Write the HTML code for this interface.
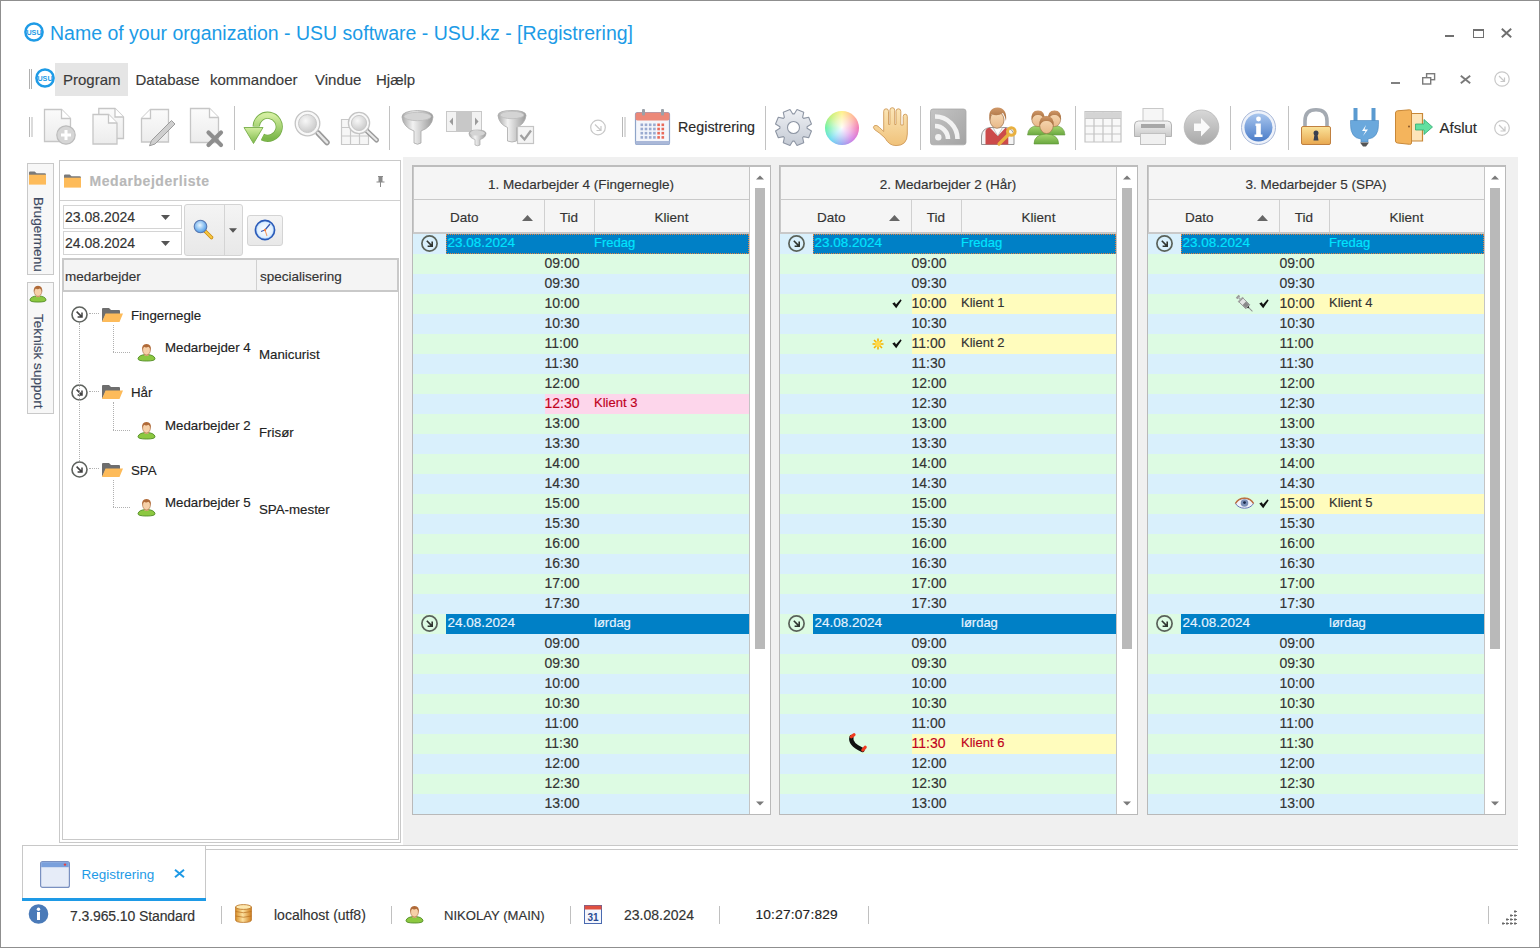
<!DOCTYPE html><html><head><meta charset="utf-8"><style>
*{margin:0;padding:0;box-sizing:border-box}
html,body{width:1540px;height:948px;overflow:hidden;background:#fff}
body{font-family:"Liberation Sans",sans-serif;color:#333;position:relative}
.a{position:absolute}
.t{position:absolute;white-space:nowrap;line-height:1;-webkit-text-stroke:0.15px currentColor}
svg{position:absolute;overflow:visible}
</style></head><body>
<div class="a" style="left:0;top:0;width:1540px;height:948px;border:1px solid #8f8f8f"></div>
<svg style="left:24px;top:22px" width="20" height="20" viewBox="0 0 20 20"><circle cx="10" cy="10" r="8.6" fill="none" stroke="#1e9be6" stroke-width="2.5"/><text x="10" y="12.6" font-family="Liberation Sans" font-weight="bold" font-size="7.2" fill="#1e9be6" text-anchor="middle">USU</text></svg>
<div class="t" style="left:50px;top:24px;font-size:19.5px;color:#1c9be6;-webkit-text-stroke:0">Name of your organization - USU software - USU.kz - [Registrering]</div>
<div class="a" style="left:1445px;top:35px;width:9px;height:2px;background:#707070"></div>
<div class="a" style="left:1473px;top:29px;width:11px;height:9px;border:1px solid #707070;border-top-width:2px"></div>
<svg style="left:1501px;top:28px" width="11" height="10" viewBox="0 0 11 10"><path d="M0.8 0.8L10.2 9.2M10.2 0.8L0.8 9.2" stroke="#6e6e6e" stroke-width="1.9"/></svg>
<div class="a" style="left:29px;top:69px;width:1px;height:20px;background:#b0b0b0"></div>
<div class="a" style="left:31px;top:69px;width:1px;height:20px;background:#b0b0b0"></div>
<svg style="left:35px;top:68px" width="20" height="20" viewBox="0 0 20 20"><circle cx="10" cy="10" r="8.6" fill="none" stroke="#1e9be6" stroke-width="2.5"/><text x="10" y="12.6" font-family="Liberation Sans" font-weight="bold" font-size="7.2" fill="#1e9be6" text-anchor="middle">USU</text></svg>
<div class="a" style="left:55px;top:63px;width:73px;height:33px;background:#e5e5e5"></div>
<div class="t" style="left:63px;top:71.8px;font-size:15px;color:#3a3a3a">Program</div>
<div class="t" style="left:135.5px;top:71.8px;font-size:15px;color:#3a3a3a">Database</div>
<div class="t" style="left:210px;top:71.8px;font-size:15px;color:#3a3a3a">kommandoer</div>
<div class="t" style="left:315px;top:71.8px;font-size:15px;color:#3a3a3a">Vindue</div>
<div class="t" style="left:376px;top:71.8px;font-size:15px;color:#3a3a3a">Hjælp</div>
<div class="a" style="left:1391px;top:82px;width:9px;height:2px;background:#808080"></div>
<svg style="left:1422px;top:73px" width="14" height="12" viewBox="0 0 14 12"><rect x="4.6" y="0.7" width="8" height="6" fill="none" stroke="#7a7a7a" stroke-width="1.4"/><rect x="0.7" y="4.7" width="8" height="6.3" fill="#fff" stroke="#7a7a7a" stroke-width="1.4"/></svg>
<svg style="left:1460px;top:75px" width="11" height="9" viewBox="0 0 11 9"><path d="M0.8 0.8L10.2 8.2M10.2 0.8L0.8 8.2" stroke="#7a7a7a" stroke-width="1.9"/></svg>
<svg style="left:1494px;top:71px" width="16" height="16" viewBox="0 0 16 16"><circle cx="8" cy="8" r="7.2" fill="none" stroke="#c8c8c8" stroke-width="1.2"/><path d="M5 5L10.5 10.5M10.5 6.5V10.5H6.5" fill="none" stroke="#c8c8c8" stroke-width="1.2"/></svg>
<svg style="left:0;top:0" width="1540" height="160" viewBox="0 0 1540 160"><defs><linearGradient id="gpage" x1="0" y1="0" x2="0" y2="1"><stop offset="0" stop-color="#fbfbfb"/><stop offset="1" stop-color="#ececec"/></linearGradient><linearGradient id="ggreen" x1="0" y1="0" x2="0" y2="1"><stop offset="0" stop-color="#d3eea0"/><stop offset="1" stop-color="#7cb84a"/></linearGradient><radialGradient id="glens" cx="0.4" cy="0.35" r="0.7"><stop offset="0" stop-color="#f8f8f8"/><stop offset="1" stop-color="#c8c8c8"/></radialGradient><linearGradient id="gfun" x1="0" y1="0" x2="1" y2="0"><stop offset="0" stop-color="#a8a8a8"/><stop offset="0.35" stop-color="#f2f2f2"/><stop offset="1" stop-color="#9a9a9a"/></linearGradient><radialGradient id="gwheel" cx="0.5" cy="0.5" r="0.5"><stop offset="0" stop-color="#ffffff"/><stop offset="1" stop-color="#ffffff" stop-opacity="0"/></radialGradient><linearGradient id="ginfo" x1="0" y1="0" x2="0" y2="1"><stop offset="0" stop-color="#a9c6ee"/><stop offset="1" stop-color="#4a7cc8"/></linearGradient><linearGradient id="glock" x1="0" y1="0" x2="0" y2="1"><stop offset="0" stop-color="#fbe39a"/><stop offset="1" stop-color="#e8a850"/></linearGradient><linearGradient id="gprint" x1="0" y1="0" x2="0" y2="1"><stop offset="0" stop-color="#f6f6f6"/><stop offset="1" stop-color="#c8c8c8"/></linearGradient><linearGradient id="garrow" x1="0" y1="0" x2="0" y2="1"><stop offset="0" stop-color="#d8d8d8"/><stop offset="1" stop-color="#a8a8a8"/></linearGradient></defs><rect x="29" y="117" width="1" height="20" fill="#b8b8b8"/><rect x="31.5" y="117" width="1" height="20" fill="#b8b8b8"/><path d="M44.5 109.5H61.5L70.5 118.5V141.5H44.5Z" fill="url(#gpage)" stroke="#c6c6c6" stroke-width="1.3"/><path d="M61.5 109.5V118.5H70.5" fill="#fff" stroke="#c6c6c6" stroke-width="1.3"/><circle cx="66" cy="135" r="9.2" fill="#d6d6d6" stroke="#bcbcbc" stroke-width="1.2"/><path d="M66 130V140M61 135H71" stroke="#fff" stroke-width="3"/><path d="M98.8 108.5H115L123.5 117V138.5H98.8Z" fill="url(#gpage)" stroke="#c6c6c6" stroke-width="1.3"/><path d="M115 108.5V117H123.5" fill="#fff" stroke="#c6c6c6" stroke-width="1.3"/><path d="M93 114.5H108.5L117 123V144H93Z" fill="url(#gpage)" stroke="#c6c6c6" stroke-width="1.3"/><path d="M108.5 114.5V123H117" fill="#fff" stroke="#c6c6c6" stroke-width="1.3"/><path d="M150.5 109.5H168.5V142H141.5V118.5Z" fill="url(#gpage)" stroke="#c6c6c6" stroke-width="1.3"/><path d="M150.5 109.5V118.5H141.5" fill="#fff" stroke="#c6c6c6" stroke-width="1.3"/><path d="M171.5 120.5L175 124L155 144L149.5 145.8L151.5 140.5Z" fill="#cfcfcf" stroke="#9c9c9c" stroke-width="1"/><path d="M190.5 108.5H209.5L218.5 117.5V142.5H190.5Z" fill="url(#gpage)" stroke="#c6c6c6" stroke-width="1.3"/><path d="M209.5 108.5V117.5H218.5" fill="#fff" stroke="#c6c6c6" stroke-width="1.3"/><path d="M208.5 132.5L221 145M221 132.5L208.5 145" stroke="#8e8e8e" stroke-width="4.2" stroke-linecap="round"/><rect x="234" y="106" width="1" height="44" fill="#c2c2c2"/><rect x="389" y="106" width="1" height="44" fill="#c2c2c2"/><rect x="765" y="106" width="1" height="44" fill="#c2c2c2"/><rect x="920" y="106" width="1" height="44" fill="#c2c2c2"/><rect x="1075" y="106" width="1" height="44" fill="#c2c2c2"/><rect x="1230" y="106" width="1" height="44" fill="#c2c2c2"/><rect x="1288" y="106" width="1" height="44" fill="#c2c2c2"/><path d="M256.2 126.5A11.5 11.5 0 1 1 262.5 137" fill="none" stroke="#76ad48" stroke-width="7.2"/><path d="M256.2 126.5A11.5 11.5 0 1 1 262.5 137" fill="none" stroke="url(#ggreen)" stroke-width="5.6"/><path d="M244 127.5H263L253.5 143.5Z" fill="url(#ggreen)" stroke="#76ad48" stroke-width="0.9" stroke-linejoin="round"/><path d="M318 133L327 142.5" stroke="#9a9a9a" stroke-width="5.5" stroke-linecap="round"/><path d="M318 133L327 142.5" stroke="#e8e8e8" stroke-width="2.5" stroke-linecap="round"/><circle cx="307.5" cy="123.5" r="12.3" fill="#f8f8f8" stroke="#c4c4c4" stroke-width="1.3"/><circle cx="307.5" cy="123.5" r="9" fill="url(#glens)" stroke="#c8c8c8" stroke-width="1"/><path d="M341.5 119.5H368.5V144.5H341.5ZM341.5 127.5H368.5M341.5 136H368.5M350.5 119.5V144.5M359.5 119.5V144.5" fill="#f6f6f6" stroke="#c8c8c8" stroke-width="1.2"/><path d="M367 131L376.5 140" stroke="#9a9a9a" stroke-width="5" stroke-linecap="round"/><path d="M367 131L376.5 140" stroke="#e8e8e8" stroke-width="2.2" stroke-linecap="round"/><circle cx="359" cy="123" r="10.6" fill="#f8f8f8" stroke="#c4c4c4" stroke-width="1.3"/><circle cx="359" cy="123" r="7.6" fill="url(#glens)" stroke="#c8c8c8" stroke-width="1"/><path d="M402 117Q402 111 417.5 110.5Q433 111 433 117Q432 127 421 131V143Q417.5 145.5 414 143V131Q403 127 402 117Z" fill="url(#gfun)" stroke="#a8a8a8" stroke-width="0.8"/><ellipse cx="417.5" cy="116.5" rx="13.5" ry="4.2" fill="#d4d4d4" stroke="#bcbcbc" stroke-width="0.8"/><rect x="446.5" y="111.5" width="35" height="20" fill="#f2f2f2" stroke="#c8c8c8"/><rect x="456" y="112" width="16" height="19" fill="#c8c8c8"/><path d="M453 117.5V125.5L449.5 121.5Z M475 117.5V125.5L478.5 121.5Z" fill="#9a9a9a"/><path d="M469 133.5Q469 130 477.5 130Q486 130 486 133.5Q485.5 138 480 139.5V145Q477.5 146.5 475 145V139.5Q469.5 138 469 133.5Z" fill="url(#gfun)" stroke="#a8a8a8" stroke-width="0.7"/><ellipse cx="477.5" cy="133.2" rx="7.5" ry="2.4" fill="#d4d4d4"/><path d="M498 115.5Q498 110.5 512 110.5Q526 110.5 526 115.5Q525 124 516.5 127.5V141Q512 143 507.5 141V127.5Q499 124 498 115.5Z" fill="url(#gfun)" stroke="#a8a8a8" stroke-width="0.8"/><ellipse cx="512" cy="115" rx="12" ry="3.7" fill="#d4d4d4" stroke="#bcbcbc" stroke-width="0.8"/><rect x="517.5" y="126.5" width="16" height="17" fill="#f4f4f4" stroke="#c4c4c4" stroke-width="1.2"/><path d="M520.5 135L524.5 139.5L531 130.5" fill="none" stroke="#a0a0a0" stroke-width="2.3"/><circle cx="598" cy="127.5" r="7.3" fill="none" stroke="#c8c8c8" stroke-width="1.2"/><path d="M595 124.5L600.5 130M601 126V130.5H596.5" fill="none" stroke="#c8c8c8" stroke-width="1.2"/><rect x="622" y="117" width="1" height="20" fill="#b8b8b8"/><rect x="624.5" y="117" width="1" height="20" fill="#b8b8b8"/><rect x="635.5" y="112.5" width="34" height="32" rx="2" fill="#f4f6fb" stroke="#8ea4c8" stroke-width="1.2"/><rect x="635.5" y="112.5" width="34" height="8" rx="2" fill="#ec8878"/><rect x="642" y="109" width="3" height="6.5" rx="1" fill="#9aa0a8"/><rect x="661" y="109" width="3" height="6.5" rx="1" fill="#9aa0a8"/><rect x="640.5" y="123.5" width="2.6" height="2.6" fill="#9aaad0"/><rect x="644.7" y="123.5" width="2.6" height="2.6" fill="#9aaad0"/><rect x="648.9" y="123.5" width="2.6" height="2.6" fill="#9aaad0"/><rect x="653.1" y="123.5" width="2.6" height="2.6" fill="#9aaad0"/><rect x="657.3" y="123.5" width="2.6" height="2.6" fill="#e86a5a"/><rect x="661.5" y="123.5" width="2.6" height="2.6" fill="#e86a5a"/><rect x="640.5" y="127.7" width="2.6" height="2.6" fill="#9aaad0"/><rect x="644.7" y="127.7" width="2.6" height="2.6" fill="#9aaad0"/><rect x="648.9" y="127.7" width="2.6" height="2.6" fill="#9aaad0"/><rect x="653.1" y="127.7" width="2.6" height="2.6" fill="#9aaad0"/><rect x="657.3" y="127.7" width="2.6" height="2.6" fill="#e86a5a"/><rect x="661.5" y="127.7" width="2.6" height="2.6" fill="#e86a5a"/><rect x="640.5" y="131.9" width="2.6" height="2.6" fill="#9aaad0"/><rect x="644.7" y="131.9" width="2.6" height="2.6" fill="#9aaad0"/><rect x="648.9" y="131.9" width="2.6" height="2.6" fill="#9aaad0"/><rect x="653.1" y="131.9" width="2.6" height="2.6" fill="#9aaad0"/><rect x="657.3" y="131.9" width="2.6" height="2.6" fill="#e86a5a"/><rect x="661.5" y="131.9" width="2.6" height="2.6" fill="#e86a5a"/><rect x="640.5" y="136.1" width="2.6" height="2.6" fill="#9aaad0"/><rect x="644.7" y="136.1" width="2.6" height="2.6" fill="#9aaad0"/><rect x="648.9" y="136.1" width="2.6" height="2.6" fill="#9aaad0"/><rect x="653.1" y="136.1" width="2.6" height="2.6" fill="#9aaad0"/><rect x="657.3" y="136.1" width="2.6" height="2.6" fill="#e86a5a"/><rect x="661.5" y="136.1" width="2.6" height="2.6" fill="#e86a5a"/><rect x="635.5" y="141" width="34" height="3.5" fill="#aab8d8"/><defs><linearGradient id="ggear" x1="0" y1="0" x2="0" y2="1"><stop offset="0" stop-color="#eef0f4"/><stop offset="1" stop-color="#c4cad4"/></linearGradient></defs><path d="M811.46 131.00 L808.68 137.72 L803.61 136.60 L802.60 137.61 L803.72 142.68 L797.00 145.46 L794.22 141.08 L792.78 141.08 L790.00 145.46 L783.28 142.68 L784.40 137.61 L783.39 136.60 L778.32 137.72 L775.54 131.00 L779.92 128.22 L779.92 126.78 L775.54 124.00 L778.32 117.28 L783.39 118.40 L784.40 117.39 L783.28 112.32 L790.00 109.54 L792.78 113.92 L794.22 113.92 L797.00 109.54 L803.72 112.32 L802.60 117.39 L803.61 118.40 L808.68 117.28 L811.46 124.00 L807.08 126.78 L807.08 128.22Z M799.5 127.5A6 6 0 1 0 787.5 127.5A6 6 0 1 0 799.5 127.5Z" fill="url(#ggear)" stroke="#8e96a4" stroke-width="1.1" fill-rule="evenodd" stroke-linejoin="round"/><defs><linearGradient id="ghand" x1="0" y1="0" x2="0" y2="1"><stop offset="0" stop-color="#fbe6b8"/><stop offset="1" stop-color="#f0c27a"/></linearGradient></defs><path d="M885 138Q880 133 874.5 129.5Q872.3 127 874.5 125.6Q876.7 124.5 879.5 127.5L883.7 131.5V111.3Q883.7 108.8 886.1 108.8Q888.5 108.8 888.5 111.3V124.5H889.9V110.2Q889.9 107.7 892.3 107.7Q894.7 107.7 894.7 110.2V124.5H896V111.3Q896 108.8 898.4 108.8Q900.8 108.8 900.8 111.3V125H903.2V116.5Q903.2 114.2 905.25 114.2Q907.3 114.2 907.3 116.5V134Q907.3 145.6 896 145.6Q889 145.6 885 138Z" fill="url(#ghand)" stroke="#cf9a58" stroke-width="0.9"/><defs><linearGradient id="grss" x1="0" y1="0" x2="1" y2="1"><stop offset="0" stop-color="#c4c4c4"/><stop offset="1" stop-color="#a4a4a4"/></linearGradient></defs><rect x="930.5" y="109" width="35.5" height="35.8" rx="2.5" fill="url(#grss)" stroke="#a8a8a8" stroke-width="0.8"/><circle cx="938.3" cy="137.3" r="3.2" fill="#f2f2f2"/><path d="M935 126A13 13 0 0 1 948 139M935 116.5A22.5 22.5 0 0 1 957.5 139" fill="none" stroke="#f2f2f2" stroke-width="4.6"/><defs><linearGradient id="gface" x1="0" y1="0" x2="0" y2="1"><stop offset="0" stop-color="#f8dcb8"/><stop offset="1" stop-color="#e8b888"/></linearGradient><linearGradient id="ghair" x1="0" y1="0" x2="0" y2="1"><stop offset="0" stop-color="#d09868"/><stop offset="1" stop-color="#a06838"/></linearGradient><linearGradient id="gbody" x1="0" y1="0" x2="0" y2="1"><stop offset="0" stop-color="#a8d870"/><stop offset="1" stop-color="#6aa840"/></linearGradient></defs><path d="M981.5 144.5V136Q982 128.5 990 127.5H1006Q1013.5 128.5 1014 136V144.5Z" fill="#f4f4f4" stroke="#8a8a8a" stroke-width="0.9"/><path d="M985.5 144.5V131Q986 128 990 127.8L997.8 136L1005.5 127.8Q1008.3 128.5 1008.3 131V144.5Z" fill="#cc4a4a"/><path d="M993 127.5L997.8 136L1002.5 127.5Z" fill="#ffffff" stroke="#999" stroke-width="0.5"/><ellipse cx="997" cy="120" rx="7" ry="8.3" fill="url(#gface)" stroke="#9a6a40" stroke-width="0.7"/><path d="M989.8 121Q987 108 997.5 107.5Q1007.5 108 1006 121Q1005 116 1003 113Q997 117 991.5 114Q990.5 117 989.8 121Z" fill="url(#ghair)"/><circle cx="1011.3" cy="131.5" r="3.8" fill="none" stroke="#e8b040" stroke-width="3"/><path d="M1008.5 134.5L999 144" stroke="#e8b040" stroke-width="3.2" stroke-linecap="round"/><path d="M1027.5 135Q1028 126 1038 125.5Q1048 126 1048.5 135Z" fill="url(#gbody)" stroke="#6a9a48" stroke-width="0.6"/><ellipse cx="1038" cy="119" rx="6.2" ry="7.6" fill="url(#gface)" stroke="#a07048" stroke-width="0.6"/><path d="M1031.7 120Q1030.5 110.5 1038 110.5Q1045.5 110.5 1044.3 120Q1042 114.5 1038 115Q1034 114.5 1031.7 120Z" fill="url(#ghair)"/><path d="M1044.0 135Q1044.5 126 1054.5 125.5Q1064.5 126 1065.0 135Z" fill="url(#gbody)" stroke="#6a9a48" stroke-width="0.6"/><ellipse cx="1054.5" cy="119" rx="6.2" ry="7.6" fill="url(#gface)" stroke="#a07048" stroke-width="0.6"/><path d="M1048.2 120Q1047.0 110.5 1054.5 110.5Q1062.0 110.5 1060.8 120Q1058.5 114.5 1054.5 115Q1050.5 114.5 1048.2 120Z" fill="url(#ghair)"/><path d="M1034 144Q1034 134.5 1046.3 134Q1058.6 134.5 1058.6 144Z" fill="url(#gbody)" stroke="#5c9432" stroke-width="0.6"/><ellipse cx="1046.5" cy="125" rx="6.8" ry="8.6" fill="url(#gface)" stroke="#a07048" stroke-width="0.6"/><path d="M1039.6 126Q1038.5 116 1046.5 116Q1054.5 116 1053.4 126Q1051 120.5 1046.5 121Q1042 120.5 1039.6 126Z" fill="url(#ghair)"/><path d="M1085 111.5H1121V142H1085ZM1085 118.5H1121M1085 126H1121M1085 134H1121M1094 111.5V142M1103 111.5V142M1112 111.5V142" fill="#f8f8f8" stroke="#c4c4c4" stroke-width="1.2"/><rect x="1085.6" y="112.1" width="34.8" height="6" fill="#d4d4d4"/><rect x="1143" y="108.5" width="20" height="16" fill="#f6f6f6" stroke="#c8c8c8"/><path d="M1134.5 125Q1134.5 121 1138.5 121H1167.5Q1171.5 121 1171.5 125V136.5H1134.5Z" fill="url(#gprint)" stroke="#b4b4b4"/><rect x="1141" y="124" width="24" height="4" fill="#a8a8a8"/><rect x="1140.5" y="133.5" width="25" height="11" fill="#f0f0f0" stroke="#c0c0c0"/><circle cx="1201.5" cy="127.3" r="17.3" fill="url(#garrow)" stroke="#b8b8b8" stroke-width="0.8"/><path d="M1194 123.5H1201V118L1210 127.3L1201 136.5V131H1194Z" fill="#fafafa"/><circle cx="1258.5" cy="127.5" r="17" fill="#eef2fa" stroke="#a8b8d8" stroke-width="1"/><circle cx="1258.5" cy="127.5" r="14" fill="url(#ginfo)"/><circle cx="1258.5" cy="119" r="2.4" fill="#fff"/><path d="M1255.5 123.5H1260.8V134.5H1262.5V137H1254.5V134.5H1256.2V126H1255.5Z" fill="#fff"/><path d="M1305 127V121Q1305 109.8 1316 109.8Q1327 109.8 1327 121V127" fill="none" stroke="#a4aab2" stroke-width="3.6"/><rect x="1301.5" y="126.5" width="29" height="18" rx="1.5" fill="url(#glock)" stroke="#c08040" stroke-width="1"/><circle cx="1316" cy="133" r="2.5" fill="#3a4050"/><path d="M1314.6 134L1313.5 140.5H1318.5L1317.4 134Z" fill="#3a4050"/><rect x="1353.5" y="108" width="4" height="13" fill="#5a9ad0"/><rect x="1371.5" y="108" width="4" height="13" fill="#5a9ad0"/><path d="M1350.5 120.5H1378.5V124.5Q1378.5 138 1368 139V142H1361V139Q1350.5 138 1350.5 124.5Z" fill="#6aa8dc" stroke="#4a88c0" stroke-width="0.6"/><path d="M1366 125L1362 131H1365.5L1363 136L1368 129.5H1364.5Z" fill="#fff"/><path d="M1360 142.5H1369L1366 146.5H1363Z" fill="#555"/><path d="M1406 113.5H1422.5V141H1406Z" fill="#fde4b8" stroke="#c88838" stroke-width="1.2"/><path d="M1395.5 113Q1395.5 111 1397.5 110.8L1409.5 109.8Q1411.5 109.8 1411.5 111.8V143Q1411.5 144.5 1409.5 144.3L1397.5 143Q1395.5 142.8 1395.5 141Z" fill="#f4b45c" stroke="#c88838" stroke-width="1"/><circle cx="1409" cy="126.5" r="1" fill="#8a5a2a"/><path d="M1415.5 124H1424V119.5L1432.5 127L1424 134.5V130H1415.5Z" fill="#62e0a0" stroke="#30a870" stroke-width="0.8"/><circle cx="1502" cy="128" r="7.3" fill="none" stroke="#c8c8c8" stroke-width="1.2"/><path d="M499 125L1504.5 130.5" fill="none"/><path d="M1499 125L1504.5 130.5M1505 126.5V131H1500.5" fill="none" stroke="#c8c8c8" stroke-width="1.2"/></svg>
<div class="t" style="left:678px;top:120px;font-size:14.3px;color:#2a2a2a">Registrering</div>
<div class="t" style="left:1439.5px;top:120px;font-size:15px;color:#2a2a2a">Afslut</div>
<div class="a" style="left:825px;top:110.5px;width:34px;height:34px;border-radius:50%;background:conic-gradient(#fff080,#ffb090,#f070b0,#d070e0,#90a0f0,#60d8f0,#60f0a0,#c0f070,#fff080)"></div>
<div class="a" style="left:825px;top:110.5px;width:34px;height:34px;border-radius:50%;background:radial-gradient(circle at 50% 50%,rgba(255,255,255,0.95) 0,rgba(255,255,255,0.55) 35%,rgba(255,255,255,0) 75%)"></div>
<div class="a" style="left:403px;top:157px;width:1115px;height:689px;background:#f0f0f0"></div>
<div class="a" style="left:22px;top:845px;width:1496px;height:1px;background:#c8c8c8"></div>
<div class="a" style="left:206px;top:849px;width:1312px;height:1px;background:#c8c8c8"></div>
<div class="a" style="left:27px;top:163px;width:27px;height:112px;border:1px solid #c9c9c9;background:#f7f7f7"></div>
<svg style="left:29px;top:171px" width="17" height="14" viewBox="0 0 18 14"><path d="M0 3V1.2Q0 0 1.2 0H6L8 2H16.5Q18 2 18 3.5V4H0Z" fill="#7a7a7a"/><rect x="0" y="3.5" width="18" height="10.5" fill="#fdbb5a"/></svg>
<div class="t" style="left:45px;top:196.5px;font-size:13.6px;color:#3e4a62;transform-origin:0 0;transform:rotate(90deg)">Brugermenu</div>
<div class="a" style="left:27px;top:282px;width:27px;height:132px;border:1px solid #c9c9c9;background:#f7f7f7"></div>
<svg style="left:29px;top:285px" width="18" height="18" viewBox="0 0 19 19"><path d="M1 15.8Q1.5 11.8 9.5 11.5Q17.5 11.8 18 15.8Q18 18 9.5 18Q1 18 1 15.8Z" fill="#8cc840" stroke="#4e8a20" stroke-width="0.9"/><path d="M7.5 10V12.8H11.5V10Z" fill="#e8b088"/><ellipse cx="9.5" cy="7" rx="3.9" ry="5" fill="#f6d0a8" stroke="#a86a40" stroke-width="0.6"/><path d="M5.2 8Q4.2 1 9.5 0.9Q14.8 1 13.8 8Q13.5 4.5 11.5 3.8Q9 5 7 3.8Q5.6 5 5.2 8Z" fill="#b06a38"/></svg>
<div class="t" style="left:45px;top:314px;font-size:13.6px;color:#3e4a62;transform-origin:0 0;transform:rotate(90deg)">Teknisk support</div>
<div class="a" style="left:59px;top:160px;width:342px;height:683px;border:1px solid #c9c9c9;background:#fff"></div>
<svg style="left:64px;top:174px" width="17" height="14" viewBox="0 0 18 14"><path d="M0 3V1.2Q0 0 1.2 0H6L8 2H16.5Q18 2 18 3.5V4H0Z" fill="#7a7a7a"/><rect x="0" y="3.5" width="18" height="10.5" fill="#fdbb5a"/></svg>
<div class="t" style="left:89.5px;top:174px;font-size:14px;letter-spacing:0.55px;font-weight:bold;color:#b8b8b8">Medarbejderliste</div>
<svg style="left:376px;top:176px" width="9" height="11" viewBox="0 0 9 11"><path d="M2 0H7V1H6.5V5.5H8.5V6.5H5V11H4V6.5H0.5V5.5H2.5V1H2Z" fill="#8a8a8a"/></svg>
<div class="a" style="left:60px;top:200px;width:340px;height:1px;background:#d0d0d0"></div>
<div class="a" style="left:63px;top:205px;width:119px;height:24px;border:1px solid #d4d4d4;background:#fff"></div>
<div class="t" style="left:65px;top:210px;font-size:14px;color:#333">23.08.2024</div>
<svg style="left:161px;top:215px" width="9" height="5" viewBox="0 0 9 5"><path d="M0 0H9L4.5 5Z" fill="#555"/></svg>
<div class="a" style="left:63px;top:231px;width:119px;height:24px;border:1px solid #d4d4d4;background:#fff"></div>
<div class="t" style="left:65px;top:236px;font-size:14px;color:#333">24.08.2024</div>
<svg style="left:161px;top:241px" width="9" height="5" viewBox="0 0 9 5"><path d="M0 0H9L4.5 5Z" fill="#555"/></svg>
<div class="a" style="left:184px;top:204px;width:59px;height:52px;border:1px solid #d4d4d4;border-radius:3px;background:linear-gradient(#f4f4f4,#e8e8e8)"></div>
<div class="a" style="left:224px;top:205px;width:1px;height:50px;background:#d4d4d4"></div>
<svg style="left:229px;top:227.5px" width="8" height="5" viewBox="0 0 9 5"><path d="M0 0H9L4.5 5Z" fill="#555"/></svg>
<svg style="left:193px;top:219px" width="22" height="22" viewBox="0 0 22 22"><defs><radialGradient id="gsl" cx="0.45" cy="0.4" r="0.6"><stop offset="0" stop-color="#e8f6ff"/><stop offset="1" stop-color="#4a9ae8"/></radialGradient></defs><path d="M12 12L18.5 18.5" stroke="#c88a10" stroke-width="3.6" stroke-linecap="round"/><path d="M12 12L18.5 18.5" stroke="#f8c840" stroke-width="2" stroke-linecap="round"/><circle cx="7.5" cy="7.5" r="6.3" fill="url(#gsl)" stroke="#5a78b0" stroke-width="1.1"/></svg>
<div class="a" style="left:247px;top:215px;width:36px;height:31px;border:1px solid #d4d4d4;border-radius:3px;background:linear-gradient(#f4f4f4,#e8e8e8)"></div>
<svg style="left:254px;top:219px" width="22" height="22" viewBox="0 0 22 22"><defs><radialGradient id="gcl" cx="0.5" cy="0.5" r="0.55"><stop offset="0" stop-color="#ffffff"/><stop offset="0.7" stop-color="#e0f0ff"/><stop offset="1" stop-color="#6aa8f0"/></radialGradient></defs><circle cx="11" cy="11" r="9.6" fill="url(#gcl)" stroke="#2a5ab8" stroke-width="1.6"/><path d="M11 11L16 5M11 11L7 12.5" stroke="#3a5ab0" stroke-width="1.3"/><path d="M11 11L13 17" stroke="#f0a070" stroke-width="1.1"/><circle cx="11" cy="11" r="1.2" fill="#f08040"/></svg>
<div class="a" style="left:62px;top:258px;width:337px;height:582px;border:1px solid #c9c9c9;background:#fff"></div>
<div class="a" style="left:62px;top:258px;width:337px;height:34px;border:2px solid #c9c9c9;background:#f4f4f4"></div>
<div class="a" style="left:256px;top:260px;width:1px;height:30px;background:#d0d0d0"></div>
<div class="t" style="left:65px;top:270px;font-size:13.5px;color:#333">medarbejder</div>
<div class="t" style="left:260px;top:270px;font-size:13.5px;color:#333">specialisering</div>
<svg style="left:71px;top:306.0px" width="17" height="17" viewBox="0 0 17 17"><circle cx="8.5" cy="8.5" r="7.5" fill="#fff" stroke="#5e625e" stroke-width="1.6"/><path d="M5.6 5.6L10.6 10.6M11 6.6V11H6.6" fill="none" stroke="#404040" stroke-width="1.5"/></svg>
<div class="a" style="left:89px;top:313.0px;width:10px;height:0;border-top:1px dotted #b0b0b0"></div>
<svg style="left:102px;top:307.5px" width="21" height="14" viewBox="0 0 21 14"><path d="M0 14V1Q0 0 1 0H7L9 2H17Q18 2 18 3V6H4Z" fill="#6e6e6e"/><path d="M0 14L3.5 5.5H21L17.5 14Z" fill="#fdbb5a"/></svg>
<div class="t" style="left:131px;top:308.7px;font-size:13.3px;color:#222">Fingernegle</div>
<div class="a" style="left:112.5px;top:324.5px;width:0;height:27.5px;border-left:1px dotted #b0b0b0"></div>
<div class="a" style="left:113px;top:352.0px;width:17px;height:0;border-top:1px dotted #b0b0b0"></div>
<svg style="left:137px;top:343.0px" width="19" height="19" viewBox="0 0 19 19"><path d="M1 15.8Q1.5 11.8 9.5 11.5Q17.5 11.8 18 15.8Q18 18 9.5 18Q1 18 1 15.8Z" fill="#8cc840" stroke="#4e8a20" stroke-width="0.9"/><path d="M7.5 10V12.8H11.5V10Z" fill="#e8b088"/><ellipse cx="9.5" cy="7" rx="3.9" ry="5" fill="#f6d0a8" stroke="#a86a40" stroke-width="0.6"/><path d="M5.2 8Q4.2 1 9.5 0.9Q14.8 1 13.8 8Q13.5 4.5 11.5 3.8Q9 5 7 3.8Q5.6 5 5.2 8Z" fill="#b06a38"/></svg>
<div class="t" style="left:165px;top:341.0px;font-size:13.3px;color:#222">Medarbejder 4</div>
<div class="t" style="left:259px;top:348.0px;font-size:13.3px;color:#222">Manicurist</div>
<svg style="left:71px;top:383.5px" width="17" height="17" viewBox="0 0 17 17"><circle cx="8.5" cy="8.5" r="7.5" fill="#fff" stroke="#5e625e" stroke-width="1.6"/><path d="M5.6 5.6L10.6 10.6M11 6.6V11H6.6" fill="none" stroke="#404040" stroke-width="1.5"/></svg>
<div class="a" style="left:89px;top:390.5px;width:10px;height:0;border-top:1px dotted #b0b0b0"></div>
<svg style="left:102px;top:385.0px" width="21" height="14" viewBox="0 0 21 14"><path d="M0 14V1Q0 0 1 0H7L9 2H17Q18 2 18 3V6H4Z" fill="#6e6e6e"/><path d="M0 14L3.5 5.5H21L17.5 14Z" fill="#fdbb5a"/></svg>
<div class="t" style="left:131px;top:386.2px;font-size:13.3px;color:#222">Hår</div>
<div class="a" style="left:112.5px;top:402.0px;width:0;height:27.5px;border-left:1px dotted #b0b0b0"></div>
<div class="a" style="left:113px;top:429.5px;width:17px;height:0;border-top:1px dotted #b0b0b0"></div>
<svg style="left:137px;top:420.5px" width="19" height="19" viewBox="0 0 19 19"><path d="M1 15.8Q1.5 11.8 9.5 11.5Q17.5 11.8 18 15.8Q18 18 9.5 18Q1 18 1 15.8Z" fill="#8cc840" stroke="#4e8a20" stroke-width="0.9"/><path d="M7.5 10V12.8H11.5V10Z" fill="#e8b088"/><ellipse cx="9.5" cy="7" rx="3.9" ry="5" fill="#f6d0a8" stroke="#a86a40" stroke-width="0.6"/><path d="M5.2 8Q4.2 1 9.5 0.9Q14.8 1 13.8 8Q13.5 4.5 11.5 3.8Q9 5 7 3.8Q5.6 5 5.2 8Z" fill="#b06a38"/></svg>
<div class="t" style="left:165px;top:418.5px;font-size:13.3px;color:#222">Medarbejder 2</div>
<div class="t" style="left:259px;top:425.5px;font-size:13.3px;color:#222">Frisør</div>
<svg style="left:71px;top:461.0px" width="17" height="17" viewBox="0 0 17 17"><circle cx="8.5" cy="8.5" r="7.5" fill="#fff" stroke="#5e625e" stroke-width="1.6"/><path d="M5.6 5.6L10.6 10.6M11 6.6V11H6.6" fill="none" stroke="#404040" stroke-width="1.5"/></svg>
<div class="a" style="left:89px;top:468.0px;width:10px;height:0;border-top:1px dotted #b0b0b0"></div>
<svg style="left:102px;top:462.5px" width="21" height="14" viewBox="0 0 21 14"><path d="M0 14V1Q0 0 1 0H7L9 2H17Q18 2 18 3V6H4Z" fill="#6e6e6e"/><path d="M0 14L3.5 5.5H21L17.5 14Z" fill="#fdbb5a"/></svg>
<div class="t" style="left:131px;top:463.7px;font-size:13.3px;color:#222">SPA</div>
<div class="a" style="left:112.5px;top:479.5px;width:0;height:27.5px;border-left:1px dotted #b0b0b0"></div>
<div class="a" style="left:113px;top:507.0px;width:17px;height:0;border-top:1px dotted #b0b0b0"></div>
<svg style="left:137px;top:498.0px" width="19" height="19" viewBox="0 0 19 19"><path d="M1 15.8Q1.5 11.8 9.5 11.5Q17.5 11.8 18 15.8Q18 18 9.5 18Q1 18 1 15.8Z" fill="#8cc840" stroke="#4e8a20" stroke-width="0.9"/><path d="M7.5 10V12.8H11.5V10Z" fill="#e8b088"/><ellipse cx="9.5" cy="7" rx="3.9" ry="5" fill="#f6d0a8" stroke="#a86a40" stroke-width="0.6"/><path d="M5.2 8Q4.2 1 9.5 0.9Q14.8 1 13.8 8Q13.5 4.5 11.5 3.8Q9 5 7 3.8Q5.6 5 5.2 8Z" fill="#b06a38"/></svg>
<div class="t" style="left:165px;top:496.0px;font-size:13.3px;color:#222">Medarbejder 5</div>
<div class="t" style="left:259px;top:503.0px;font-size:13.3px;color:#222">SPA-mester</div>
<div class="a" style="left:79px;top:323px;width:0;height:138px;border-left:1px dotted #b0b0b0"></div>
<div class="a" style="left:412px;top:165px;width:359px;height:650px;border:1px solid #b9b9b9;border-top:2px solid #bdbdbd;background:#f5f5f5"></div>
<div class="a" style="left:413px;top:167px;width:1px;height:67px;background:#c8c8c8"></div>
<div class="a" style="left:749px;top:167px;width:1px;height:647px;background:#c4c4c4"></div>
<div class="a" style="left:750px;top:167px;width:20px;height:647px;background:#fff"></div>
<svg style="left:756px;top:175px" width="8" height="5" viewBox="0 0 8 5"><path d="M0 4.5L4 0.5L8 4.5Z" fill="#7a7a7a"/></svg>
<svg style="left:756px;top:801px" width="8" height="5" viewBox="0 0 8 5"><path d="M0 0.5L4 4.5L8 0.5Z" fill="#7a7a7a"/></svg>
<div class="a" style="left:755px;top:187.5px;width:10px;height:461px;background:#b9b9b9"></div>
<div class="a" style="left:413px;top:199px;width:336px;height:1px;background:#c9c9c9"></div>
<div class="t" style="left:413px;top:177.5px;width:336px;text-align:center;font-size:13.5px;color:#333">1. Medarbejder 4 (Fingernegle)</div>
<div class="a" style="left:413px;top:232px;width:336px;height:2px;background:#c9c9c9"></div>
<div class="a" style="left:544px;top:200px;width:1px;height:32px;background:#d0d0d0"></div>
<div class="a" style="left:594px;top:200px;width:1px;height:32px;background:#d0d0d0"></div>
<div class="t" style="left:450px;top:210.5px;font-size:13.5px;color:#333">Dato</div>
<svg style="left:522px;top:215px" width="11" height="6" viewBox="0 0 11 6"><path d="M0 6L5.5 0L11 6Z" fill="#666"/></svg>
<div class="t" style="left:544px;top:210.5px;width:50px;text-align:center;font-size:13.5px;color:#333">Tid</div>
<div class="t" style="left:594px;top:210.5px;width:155px;text-align:center;font-size:13.5px;color:#333">Klient</div>
<div class="a" style="left:413px;top:234px;width:336px;height:20px;background:#d9f0fc"></div>
<div class="a" style="left:446px;top:234px;width:303px;height:20px;background:#0080c6"></div>
<div class="t" style="left:447.5px;top:235.5px;font-size:13.5px;color:#00e5ff">23.08.2024</div>
<div class="t" style="left:594px;top:236px;font-size:13px;color:#00e5ff">Fredag</div>
<svg style="left:421px;top:235px" width="17" height="17" viewBox="0 0 17 17"><circle cx="8.5" cy="8.5" r="7.6" fill="none" stroke="#5a625a" stroke-width="1.7"/><path d="M5.8 5.8L10.6 10.6M11.2 6.6V11.2H6.6" fill="none" stroke="#303530" stroke-width="1.6"/></svg>
<div class="a" style="left:446px;top:234px;width:303px;height:20px;border:1px dotted #e08040"></div>
<div class="a" style="left:413px;top:254px;width:336px;height:20px;background:#ddfbe3"></div>
<div class="t" style="left:544.5px;top:256px;font-size:14px;color:#333">09:00</div>
<div class="a" style="left:413px;top:274px;width:336px;height:20px;background:#d9f0fc"></div>
<div class="t" style="left:544.5px;top:276px;font-size:14px;color:#333">09:30</div>
<div class="a" style="left:413px;top:294px;width:336px;height:20px;background:#ddfbe3"></div>
<div class="t" style="left:544.5px;top:296px;font-size:14px;color:#333">10:00</div>
<div class="a" style="left:413px;top:314px;width:336px;height:20px;background:#d9f0fc"></div>
<div class="t" style="left:544.5px;top:316px;font-size:14px;color:#333">10:30</div>
<div class="a" style="left:413px;top:334px;width:336px;height:20px;background:#ddfbe3"></div>
<div class="t" style="left:544.5px;top:336px;font-size:14px;color:#333">11:00</div>
<div class="a" style="left:413px;top:354px;width:336px;height:20px;background:#d9f0fc"></div>
<div class="t" style="left:544.5px;top:356px;font-size:14px;color:#333">11:30</div>
<div class="a" style="left:413px;top:374px;width:336px;height:20px;background:#ddfbe3"></div>
<div class="t" style="left:544.5px;top:376px;font-size:14px;color:#333">12:00</div>
<div class="a" style="left:413px;top:394px;width:336px;height:20px;background:#d9f0fc"></div>
<div class="a" style="left:544.5px;top:394px;width:204.5px;height:20px;background:#fdd6eb"></div>
<div class="t" style="left:594px;top:396px;font-size:13px;color:#c0001c">Klient 3</div>
<div class="t" style="left:544.5px;top:396px;font-size:14px;color:#c0001c">12:30</div>
<div class="a" style="left:413px;top:414px;width:336px;height:20px;background:#ddfbe3"></div>
<div class="t" style="left:544.5px;top:416px;font-size:14px;color:#333">13:00</div>
<div class="a" style="left:413px;top:434px;width:336px;height:20px;background:#d9f0fc"></div>
<div class="t" style="left:544.5px;top:436px;font-size:14px;color:#333">13:30</div>
<div class="a" style="left:413px;top:454px;width:336px;height:20px;background:#ddfbe3"></div>
<div class="t" style="left:544.5px;top:456px;font-size:14px;color:#333">14:00</div>
<div class="a" style="left:413px;top:474px;width:336px;height:20px;background:#d9f0fc"></div>
<div class="t" style="left:544.5px;top:476px;font-size:14px;color:#333">14:30</div>
<div class="a" style="left:413px;top:494px;width:336px;height:20px;background:#ddfbe3"></div>
<div class="t" style="left:544.5px;top:496px;font-size:14px;color:#333">15:00</div>
<div class="a" style="left:413px;top:514px;width:336px;height:20px;background:#d9f0fc"></div>
<div class="t" style="left:544.5px;top:516px;font-size:14px;color:#333">15:30</div>
<div class="a" style="left:413px;top:534px;width:336px;height:20px;background:#ddfbe3"></div>
<div class="t" style="left:544.5px;top:536px;font-size:14px;color:#333">16:00</div>
<div class="a" style="left:413px;top:554px;width:336px;height:20px;background:#d9f0fc"></div>
<div class="t" style="left:544.5px;top:556px;font-size:14px;color:#333">16:30</div>
<div class="a" style="left:413px;top:574px;width:336px;height:20px;background:#ddfbe3"></div>
<div class="t" style="left:544.5px;top:576px;font-size:14px;color:#333">17:00</div>
<div class="a" style="left:413px;top:594px;width:336px;height:20px;background:#d9f0fc"></div>
<div class="t" style="left:544.5px;top:596px;font-size:14px;color:#333">17:30</div>
<div class="a" style="left:413px;top:614px;width:336px;height:20px;background:#ddfbe3"></div>
<div class="a" style="left:446px;top:614px;width:303px;height:20px;background:#0080c6"></div>
<div class="t" style="left:447.5px;top:615.5px;font-size:13.5px;color:#e8f4ff">24.08.2024</div>
<div class="t" style="left:594px;top:616px;font-size:13px;color:#e8f4ff">lørdag</div>
<svg style="left:421px;top:615px" width="17" height="17" viewBox="0 0 17 17"><circle cx="8.5" cy="8.5" r="7.6" fill="none" stroke="#5a625a" stroke-width="1.7"/><path d="M5.8 5.8L10.6 10.6M11.2 6.6V11.2H6.6" fill="none" stroke="#303530" stroke-width="1.6"/></svg>
<div class="a" style="left:413px;top:634px;width:336px;height:20px;background:#d9f0fc"></div>
<div class="t" style="left:544.5px;top:636px;font-size:14px;color:#333">09:00</div>
<div class="a" style="left:413px;top:654px;width:336px;height:20px;background:#ddfbe3"></div>
<div class="t" style="left:544.5px;top:656px;font-size:14px;color:#333">09:30</div>
<div class="a" style="left:413px;top:674px;width:336px;height:20px;background:#d9f0fc"></div>
<div class="t" style="left:544.5px;top:676px;font-size:14px;color:#333">10:00</div>
<div class="a" style="left:413px;top:694px;width:336px;height:20px;background:#ddfbe3"></div>
<div class="t" style="left:544.5px;top:696px;font-size:14px;color:#333">10:30</div>
<div class="a" style="left:413px;top:714px;width:336px;height:20px;background:#d9f0fc"></div>
<div class="t" style="left:544.5px;top:716px;font-size:14px;color:#333">11:00</div>
<div class="a" style="left:413px;top:734px;width:336px;height:20px;background:#ddfbe3"></div>
<div class="t" style="left:544.5px;top:736px;font-size:14px;color:#333">11:30</div>
<div class="a" style="left:413px;top:754px;width:336px;height:20px;background:#d9f0fc"></div>
<div class="t" style="left:544.5px;top:756px;font-size:14px;color:#333">12:00</div>
<div class="a" style="left:413px;top:774px;width:336px;height:20px;background:#ddfbe3"></div>
<div class="t" style="left:544.5px;top:776px;font-size:14px;color:#333">12:30</div>
<div class="a" style="left:413px;top:794px;width:336px;height:20px;background:#d9f0fc"></div>
<div class="t" style="left:544.5px;top:796px;font-size:14px;color:#333">13:00</div>
<div class="a" style="left:779px;top:165px;width:359px;height:650px;border:1px solid #b9b9b9;border-top:2px solid #bdbdbd;background:#f5f5f5"></div>
<div class="a" style="left:780px;top:167px;width:1px;height:67px;background:#c8c8c8"></div>
<div class="a" style="left:1116px;top:167px;width:1px;height:647px;background:#c4c4c4"></div>
<div class="a" style="left:1117px;top:167px;width:20px;height:647px;background:#fff"></div>
<svg style="left:1123px;top:175px" width="8" height="5" viewBox="0 0 8 5"><path d="M0 4.5L4 0.5L8 4.5Z" fill="#7a7a7a"/></svg>
<svg style="left:1123px;top:801px" width="8" height="5" viewBox="0 0 8 5"><path d="M0 0.5L4 4.5L8 0.5Z" fill="#7a7a7a"/></svg>
<div class="a" style="left:1122px;top:187.5px;width:10px;height:461px;background:#b9b9b9"></div>
<div class="a" style="left:780px;top:199px;width:336px;height:1px;background:#c9c9c9"></div>
<div class="t" style="left:780px;top:177.5px;width:336px;text-align:center;font-size:13.5px;color:#333">2. Medarbejder 2 (Hår)</div>
<div class="a" style="left:780px;top:232px;width:336px;height:2px;background:#c9c9c9"></div>
<div class="a" style="left:911px;top:200px;width:1px;height:32px;background:#d0d0d0"></div>
<div class="a" style="left:961px;top:200px;width:1px;height:32px;background:#d0d0d0"></div>
<div class="t" style="left:817px;top:210.5px;font-size:13.5px;color:#333">Dato</div>
<svg style="left:889px;top:215px" width="11" height="6" viewBox="0 0 11 6"><path d="M0 6L5.5 0L11 6Z" fill="#666"/></svg>
<div class="t" style="left:911px;top:210.5px;width:50px;text-align:center;font-size:13.5px;color:#333">Tid</div>
<div class="t" style="left:961px;top:210.5px;width:155px;text-align:center;font-size:13.5px;color:#333">Klient</div>
<div class="a" style="left:780px;top:234px;width:336px;height:20px;background:#d9f0fc"></div>
<div class="a" style="left:813px;top:234px;width:303px;height:20px;background:#0080c6"></div>
<div class="t" style="left:814.5px;top:235.5px;font-size:13.5px;color:#00e5ff">23.08.2024</div>
<div class="t" style="left:961px;top:236px;font-size:13px;color:#00e5ff">Fredag</div>
<svg style="left:788px;top:235px" width="17" height="17" viewBox="0 0 17 17"><circle cx="8.5" cy="8.5" r="7.6" fill="none" stroke="#5a625a" stroke-width="1.7"/><path d="M5.8 5.8L10.6 10.6M11.2 6.6V11.2H6.6" fill="none" stroke="#303530" stroke-width="1.6"/></svg>
<div class="a" style="left:813px;top:234px;width:303px;height:20px;border:1px dotted #e08040"></div>
<div class="a" style="left:780px;top:254px;width:336px;height:20px;background:#ddfbe3"></div>
<div class="t" style="left:911.5px;top:256px;font-size:14px;color:#333">09:00</div>
<div class="a" style="left:780px;top:274px;width:336px;height:20px;background:#d9f0fc"></div>
<div class="t" style="left:911.5px;top:276px;font-size:14px;color:#333">09:30</div>
<div class="a" style="left:780px;top:294px;width:336px;height:20px;background:#ddfbe3"></div>
<div class="a" style="left:911.5px;top:294px;width:204.5px;height:20px;background:#fffcbd"></div>
<div class="t" style="left:961px;top:296px;font-size:13px;color:#333">Klient 1</div>
<svg style="left:892px;top:299px" width="10" height="10" viewBox="0 0 10 10"><path d="M0.3 4.6L2.8 3.2L4 5.6L8.6 0.3L9.6 1.5L4.2 9.3Z" fill="#111"/></svg>
<div class="t" style="left:911.5px;top:296px;font-size:14px;color:#333">10:00</div>
<div class="a" style="left:780px;top:314px;width:336px;height:20px;background:#d9f0fc"></div>
<div class="t" style="left:911.5px;top:316px;font-size:14px;color:#333">10:30</div>
<div class="a" style="left:780px;top:334px;width:336px;height:20px;background:#ddfbe3"></div>
<div class="a" style="left:911.5px;top:334px;width:204.5px;height:20px;background:#fffcbd"></div>
<div class="t" style="left:961px;top:336px;font-size:13px;color:#333">Klient 2</div>
<svg style="left:892px;top:339px" width="10" height="10" viewBox="0 0 10 10"><path d="M0.3 4.6L2.8 3.2L4 5.6L8.6 0.3L9.6 1.5L4.2 9.3Z" fill="#111"/></svg>
<svg style="left:872px;top:338px" width="12" height="12" viewBox="0 0 12 12"><g stroke="#f4b400" stroke-width="1.6"><path d="M6 0.5V11.5M0.5 6H11.5M2 2L10 10M10 2L2 10"/></g><circle cx="6" cy="6" r="3" fill="#ffd84a"/></svg>
<div class="t" style="left:911.5px;top:336px;font-size:14px;color:#333">11:00</div>
<div class="a" style="left:780px;top:354px;width:336px;height:20px;background:#d9f0fc"></div>
<div class="t" style="left:911.5px;top:356px;font-size:14px;color:#333">11:30</div>
<div class="a" style="left:780px;top:374px;width:336px;height:20px;background:#ddfbe3"></div>
<div class="t" style="left:911.5px;top:376px;font-size:14px;color:#333">12:00</div>
<div class="a" style="left:780px;top:394px;width:336px;height:20px;background:#d9f0fc"></div>
<div class="t" style="left:911.5px;top:396px;font-size:14px;color:#333">12:30</div>
<div class="a" style="left:780px;top:414px;width:336px;height:20px;background:#ddfbe3"></div>
<div class="t" style="left:911.5px;top:416px;font-size:14px;color:#333">13:00</div>
<div class="a" style="left:780px;top:434px;width:336px;height:20px;background:#d9f0fc"></div>
<div class="t" style="left:911.5px;top:436px;font-size:14px;color:#333">13:30</div>
<div class="a" style="left:780px;top:454px;width:336px;height:20px;background:#ddfbe3"></div>
<div class="t" style="left:911.5px;top:456px;font-size:14px;color:#333">14:00</div>
<div class="a" style="left:780px;top:474px;width:336px;height:20px;background:#d9f0fc"></div>
<div class="t" style="left:911.5px;top:476px;font-size:14px;color:#333">14:30</div>
<div class="a" style="left:780px;top:494px;width:336px;height:20px;background:#ddfbe3"></div>
<div class="t" style="left:911.5px;top:496px;font-size:14px;color:#333">15:00</div>
<div class="a" style="left:780px;top:514px;width:336px;height:20px;background:#d9f0fc"></div>
<div class="t" style="left:911.5px;top:516px;font-size:14px;color:#333">15:30</div>
<div class="a" style="left:780px;top:534px;width:336px;height:20px;background:#ddfbe3"></div>
<div class="t" style="left:911.5px;top:536px;font-size:14px;color:#333">16:00</div>
<div class="a" style="left:780px;top:554px;width:336px;height:20px;background:#d9f0fc"></div>
<div class="t" style="left:911.5px;top:556px;font-size:14px;color:#333">16:30</div>
<div class="a" style="left:780px;top:574px;width:336px;height:20px;background:#ddfbe3"></div>
<div class="t" style="left:911.5px;top:576px;font-size:14px;color:#333">17:00</div>
<div class="a" style="left:780px;top:594px;width:336px;height:20px;background:#d9f0fc"></div>
<div class="t" style="left:911.5px;top:596px;font-size:14px;color:#333">17:30</div>
<div class="a" style="left:780px;top:614px;width:336px;height:20px;background:#ddfbe3"></div>
<div class="a" style="left:813px;top:614px;width:303px;height:20px;background:#0080c6"></div>
<div class="t" style="left:814.5px;top:615.5px;font-size:13.5px;color:#e8f4ff">24.08.2024</div>
<div class="t" style="left:961px;top:616px;font-size:13px;color:#e8f4ff">lørdag</div>
<svg style="left:788px;top:615px" width="17" height="17" viewBox="0 0 17 17"><circle cx="8.5" cy="8.5" r="7.6" fill="none" stroke="#5a625a" stroke-width="1.7"/><path d="M5.8 5.8L10.6 10.6M11.2 6.6V11.2H6.6" fill="none" stroke="#303530" stroke-width="1.6"/></svg>
<div class="a" style="left:780px;top:634px;width:336px;height:20px;background:#d9f0fc"></div>
<div class="t" style="left:911.5px;top:636px;font-size:14px;color:#333">09:00</div>
<div class="a" style="left:780px;top:654px;width:336px;height:20px;background:#ddfbe3"></div>
<div class="t" style="left:911.5px;top:656px;font-size:14px;color:#333">09:30</div>
<div class="a" style="left:780px;top:674px;width:336px;height:20px;background:#d9f0fc"></div>
<div class="t" style="left:911.5px;top:676px;font-size:14px;color:#333">10:00</div>
<div class="a" style="left:780px;top:694px;width:336px;height:20px;background:#ddfbe3"></div>
<div class="t" style="left:911.5px;top:696px;font-size:14px;color:#333">10:30</div>
<div class="a" style="left:780px;top:714px;width:336px;height:20px;background:#d9f0fc"></div>
<div class="t" style="left:911.5px;top:716px;font-size:14px;color:#333">11:00</div>
<div class="a" style="left:780px;top:734px;width:336px;height:20px;background:#ddfbe3"></div>
<div class="a" style="left:911.5px;top:734px;width:204.5px;height:20px;background:#fffcbd"></div>
<div class="t" style="left:961px;top:736px;font-size:13px;color:#c0001c">Klient 6</div>
<svg style="left:848px;top:733px" width="20" height="20" viewBox="0 0 20 20"><path d="M3.5 4Q1.5 11 14.5 17" fill="none" stroke="#111" stroke-width="4.2" stroke-linecap="round"/><path d="M3.3 3.8L6 1.8M14.8 17L17.2 14.2" fill="none" stroke="#f03a20" stroke-width="3.2" stroke-linecap="round"/></svg>
<div class="t" style="left:911.5px;top:736px;font-size:14px;color:#c0001c">11:30</div>
<div class="a" style="left:780px;top:754px;width:336px;height:20px;background:#d9f0fc"></div>
<div class="t" style="left:911.5px;top:756px;font-size:14px;color:#333">12:00</div>
<div class="a" style="left:780px;top:774px;width:336px;height:20px;background:#ddfbe3"></div>
<div class="t" style="left:911.5px;top:776px;font-size:14px;color:#333">12:30</div>
<div class="a" style="left:780px;top:794px;width:336px;height:20px;background:#d9f0fc"></div>
<div class="t" style="left:911.5px;top:796px;font-size:14px;color:#333">13:00</div>
<div class="a" style="left:1147px;top:165px;width:359px;height:650px;border:1px solid #b9b9b9;border-top:2px solid #bdbdbd;background:#f5f5f5"></div>
<div class="a" style="left:1148px;top:167px;width:1px;height:67px;background:#c8c8c8"></div>
<div class="a" style="left:1484px;top:167px;width:1px;height:647px;background:#c4c4c4"></div>
<div class="a" style="left:1485px;top:167px;width:20px;height:647px;background:#fff"></div>
<svg style="left:1491px;top:175px" width="8" height="5" viewBox="0 0 8 5"><path d="M0 4.5L4 0.5L8 4.5Z" fill="#7a7a7a"/></svg>
<svg style="left:1491px;top:801px" width="8" height="5" viewBox="0 0 8 5"><path d="M0 0.5L4 4.5L8 0.5Z" fill="#7a7a7a"/></svg>
<div class="a" style="left:1490px;top:187.5px;width:10px;height:461px;background:#b9b9b9"></div>
<div class="a" style="left:1148px;top:199px;width:336px;height:1px;background:#c9c9c9"></div>
<div class="t" style="left:1148px;top:177.5px;width:336px;text-align:center;font-size:13.5px;color:#333">3. Medarbejder 5 (SPA)</div>
<div class="a" style="left:1148px;top:232px;width:336px;height:2px;background:#c9c9c9"></div>
<div class="a" style="left:1279px;top:200px;width:1px;height:32px;background:#d0d0d0"></div>
<div class="a" style="left:1329px;top:200px;width:1px;height:32px;background:#d0d0d0"></div>
<div class="t" style="left:1185px;top:210.5px;font-size:13.5px;color:#333">Dato</div>
<svg style="left:1257px;top:215px" width="11" height="6" viewBox="0 0 11 6"><path d="M0 6L5.5 0L11 6Z" fill="#666"/></svg>
<div class="t" style="left:1279px;top:210.5px;width:50px;text-align:center;font-size:13.5px;color:#333">Tid</div>
<div class="t" style="left:1329px;top:210.5px;width:155px;text-align:center;font-size:13.5px;color:#333">Klient</div>
<div class="a" style="left:1148px;top:234px;width:336px;height:20px;background:#d9f0fc"></div>
<div class="a" style="left:1181px;top:234px;width:303px;height:20px;background:#0080c6"></div>
<div class="t" style="left:1182.5px;top:235.5px;font-size:13.5px;color:#00e5ff">23.08.2024</div>
<div class="t" style="left:1329px;top:236px;font-size:13px;color:#00e5ff">Fredag</div>
<svg style="left:1156px;top:235px" width="17" height="17" viewBox="0 0 17 17"><circle cx="8.5" cy="8.5" r="7.6" fill="none" stroke="#5a625a" stroke-width="1.7"/><path d="M5.8 5.8L10.6 10.6M11.2 6.6V11.2H6.6" fill="none" stroke="#303530" stroke-width="1.6"/></svg>
<div class="a" style="left:1181px;top:234px;width:303px;height:20px;border:1px dotted #e08040"></div>
<div class="a" style="left:1148px;top:254px;width:336px;height:20px;background:#ddfbe3"></div>
<div class="t" style="left:1279.5px;top:256px;font-size:14px;color:#333">09:00</div>
<div class="a" style="left:1148px;top:274px;width:336px;height:20px;background:#d9f0fc"></div>
<div class="t" style="left:1279.5px;top:276px;font-size:14px;color:#333">09:30</div>
<div class="a" style="left:1148px;top:294px;width:336px;height:20px;background:#ddfbe3"></div>
<div class="a" style="left:1279.5px;top:294px;width:204.5px;height:20px;background:#fffcbd"></div>
<div class="t" style="left:1329px;top:296px;font-size:13px;color:#333">Klient 4</div>
<svg style="left:1259px;top:299px" width="10" height="10" viewBox="0 0 10 10"><path d="M0.3 4.6L2.8 3.2L4 5.6L8.6 0.3L9.6 1.5L4.2 9.3Z" fill="#111"/></svg>
<svg style="left:1234px;top:293px" width="22" height="22" viewBox="0 0 22 22"><g transform="rotate(-45 11 11)"><rect x="9" y="0" width="4" height="2.2" fill="#9a9a9a"/><rect x="10.2" y="1.5" width="1.6" height="3" fill="#b0b0b0"/><rect x="7.6" y="4" width="6.8" height="2" fill="#a8a8a8"/><rect x="8.2" y="5.5" width="5.6" height="9.5" fill="#e4e4e4" stroke="#8a8a8a" stroke-width="0.8"/><rect x="8.6" y="10" width="4.8" height="4.6" fill="#8a8a8a"/><path d="M9.5 15H12.5L11 17Z" fill="#333"/><rect x="10.6" y="16.5" width="0.9" height="5" fill="#909090"/></g></svg>
<div class="t" style="left:1279.5px;top:296px;font-size:14px;color:#333">10:00</div>
<div class="a" style="left:1148px;top:314px;width:336px;height:20px;background:#d9f0fc"></div>
<div class="t" style="left:1279.5px;top:316px;font-size:14px;color:#333">10:30</div>
<div class="a" style="left:1148px;top:334px;width:336px;height:20px;background:#ddfbe3"></div>
<div class="t" style="left:1279.5px;top:336px;font-size:14px;color:#333">11:00</div>
<div class="a" style="left:1148px;top:354px;width:336px;height:20px;background:#d9f0fc"></div>
<div class="t" style="left:1279.5px;top:356px;font-size:14px;color:#333">11:30</div>
<div class="a" style="left:1148px;top:374px;width:336px;height:20px;background:#ddfbe3"></div>
<div class="t" style="left:1279.5px;top:376px;font-size:14px;color:#333">12:00</div>
<div class="a" style="left:1148px;top:394px;width:336px;height:20px;background:#d9f0fc"></div>
<div class="t" style="left:1279.5px;top:396px;font-size:14px;color:#333">12:30</div>
<div class="a" style="left:1148px;top:414px;width:336px;height:20px;background:#ddfbe3"></div>
<div class="t" style="left:1279.5px;top:416px;font-size:14px;color:#333">13:00</div>
<div class="a" style="left:1148px;top:434px;width:336px;height:20px;background:#d9f0fc"></div>
<div class="t" style="left:1279.5px;top:436px;font-size:14px;color:#333">13:30</div>
<div class="a" style="left:1148px;top:454px;width:336px;height:20px;background:#ddfbe3"></div>
<div class="t" style="left:1279.5px;top:456px;font-size:14px;color:#333">14:00</div>
<div class="a" style="left:1148px;top:474px;width:336px;height:20px;background:#d9f0fc"></div>
<div class="t" style="left:1279.5px;top:476px;font-size:14px;color:#333">14:30</div>
<div class="a" style="left:1148px;top:494px;width:336px;height:20px;background:#ddfbe3"></div>
<div class="a" style="left:1279.5px;top:494px;width:204.5px;height:20px;background:#fffcbd"></div>
<div class="t" style="left:1329px;top:496px;font-size:13px;color:#333">Klient 5</div>
<svg style="left:1259px;top:499px" width="10" height="10" viewBox="0 0 10 10"><path d="M0.3 4.6L2.8 3.2L4 5.6L8.6 0.3L9.6 1.5L4.2 9.3Z" fill="#111"/></svg>
<svg style="left:1235px;top:497px" width="19" height="13" viewBox="0 0 19 13"><path d="M0.5 6.5C4 -0.5 15 -0.5 18.5 6.5C15 12.8 4 12.8 0.5 6.5Z" fill="#f0f2fa" stroke="#6a78b8" stroke-width="1"/><path d="M0.5 6.5C4 -0.5 15 -0.5 18.5 6.5" fill="none" stroke="#c07040" stroke-width="1.6"/><circle cx="9.5" cy="6" r="3.8" fill="#7a90b8"/><circle cx="9.5" cy="5.6" r="1.4" fill="#1a2a4a"/></svg>
<div class="t" style="left:1279.5px;top:496px;font-size:14px;color:#333">15:00</div>
<div class="a" style="left:1148px;top:514px;width:336px;height:20px;background:#d9f0fc"></div>
<div class="t" style="left:1279.5px;top:516px;font-size:14px;color:#333">15:30</div>
<div class="a" style="left:1148px;top:534px;width:336px;height:20px;background:#ddfbe3"></div>
<div class="t" style="left:1279.5px;top:536px;font-size:14px;color:#333">16:00</div>
<div class="a" style="left:1148px;top:554px;width:336px;height:20px;background:#d9f0fc"></div>
<div class="t" style="left:1279.5px;top:556px;font-size:14px;color:#333">16:30</div>
<div class="a" style="left:1148px;top:574px;width:336px;height:20px;background:#ddfbe3"></div>
<div class="t" style="left:1279.5px;top:576px;font-size:14px;color:#333">17:00</div>
<div class="a" style="left:1148px;top:594px;width:336px;height:20px;background:#d9f0fc"></div>
<div class="t" style="left:1279.5px;top:596px;font-size:14px;color:#333">17:30</div>
<div class="a" style="left:1148px;top:614px;width:336px;height:20px;background:#ddfbe3"></div>
<div class="a" style="left:1181px;top:614px;width:303px;height:20px;background:#0080c6"></div>
<div class="t" style="left:1182.5px;top:615.5px;font-size:13.5px;color:#e8f4ff">24.08.2024</div>
<div class="t" style="left:1329px;top:616px;font-size:13px;color:#e8f4ff">lørdag</div>
<svg style="left:1156px;top:615px" width="17" height="17" viewBox="0 0 17 17"><circle cx="8.5" cy="8.5" r="7.6" fill="none" stroke="#5a625a" stroke-width="1.7"/><path d="M5.8 5.8L10.6 10.6M11.2 6.6V11.2H6.6" fill="none" stroke="#303530" stroke-width="1.6"/></svg>
<div class="a" style="left:1148px;top:634px;width:336px;height:20px;background:#d9f0fc"></div>
<div class="t" style="left:1279.5px;top:636px;font-size:14px;color:#333">09:00</div>
<div class="a" style="left:1148px;top:654px;width:336px;height:20px;background:#ddfbe3"></div>
<div class="t" style="left:1279.5px;top:656px;font-size:14px;color:#333">09:30</div>
<div class="a" style="left:1148px;top:674px;width:336px;height:20px;background:#d9f0fc"></div>
<div class="t" style="left:1279.5px;top:676px;font-size:14px;color:#333">10:00</div>
<div class="a" style="left:1148px;top:694px;width:336px;height:20px;background:#ddfbe3"></div>
<div class="t" style="left:1279.5px;top:696px;font-size:14px;color:#333">10:30</div>
<div class="a" style="left:1148px;top:714px;width:336px;height:20px;background:#d9f0fc"></div>
<div class="t" style="left:1279.5px;top:716px;font-size:14px;color:#333">11:00</div>
<div class="a" style="left:1148px;top:734px;width:336px;height:20px;background:#ddfbe3"></div>
<div class="t" style="left:1279.5px;top:736px;font-size:14px;color:#333">11:30</div>
<div class="a" style="left:1148px;top:754px;width:336px;height:20px;background:#d9f0fc"></div>
<div class="t" style="left:1279.5px;top:756px;font-size:14px;color:#333">12:00</div>
<div class="a" style="left:1148px;top:774px;width:336px;height:20px;background:#ddfbe3"></div>
<div class="t" style="left:1279.5px;top:776px;font-size:14px;color:#333">12:30</div>
<div class="a" style="left:1148px;top:794px;width:336px;height:20px;background:#d9f0fc"></div>
<div class="t" style="left:1279.5px;top:796px;font-size:14px;color:#333">13:00</div>
<div class="a" style="left:22px;top:845px;width:184px;height:56px;border:1px solid #c8c8c8;border-bottom:0;background:#fff"></div>
<div class="a" style="left:22px;top:898px;width:184px;height:3px;background:#1e9ae6"></div>
<svg style="left:40px;top:861px" width="30" height="27" viewBox="0 0 30 27"><rect x="0.6" y="0.6" width="28.8" height="25.8" rx="2" fill="#e6ecf8" stroke="#7a90c0" stroke-width="1.2"/><rect x="1.2" y="1.2" width="27.6" height="5" fill="#7aa0dc"/><circle cx="25" cy="3.6" r="1.2" fill="#e84040"/></svg>
<div class="t" style="left:81.5px;top:867.5px;font-size:13.5px;color:#1e9ae6;-webkit-text-stroke:0">Registrering</div>
<svg style="left:174px;top:869px" width="11" height="9" viewBox="0 0 11 9"><path d="M1 0.8L10 8.2M10 0.8L1 8.2" stroke="#1e9ae6" stroke-width="2"/></svg>
<svg style="left:28px;top:904px" width="21" height="20" viewBox="0 0 21 20"><circle cx="10.5" cy="10" r="9.8" fill="#4a7ab8"/><circle cx="10.5" cy="5.3" r="1.7" fill="#fff"/><rect x="9" y="8" width="3" height="8" fill="#fff"/></svg>
<div class="t" style="left:70px;top:909px;font-size:14px;color:#333;letter-spacing:-0.1px">7.3.965.10 Standard</div>
<div class="a" style="left:221px;top:906px;width:1px;height:18px;background:#c0c0c0"></div>
<div class="a" style="left:391px;top:906px;width:1px;height:18px;background:#c0c0c0"></div>
<div class="a" style="left:570px;top:906px;width:1px;height:18px;background:#c0c0c0"></div>
<div class="a" style="left:719px;top:906px;width:1px;height:18px;background:#c0c0c0"></div>
<div class="a" style="left:868px;top:906px;width:1px;height:18px;background:#c0c0c0"></div>
<div class="a" style="left:1488px;top:906px;width:1px;height:18px;background:#c0c0c0"></div>
<svg style="left:235px;top:904px" width="17" height="19" viewBox="0 0 17 19"><defs><linearGradient id="gdb" x1="0" x2="1"><stop offset="0" stop-color="#d8902a"/><stop offset="0.45" stop-color="#fde2a0"/><stop offset="1" stop-color="#d08020"/></linearGradient></defs><path d="M0.6 3V16Q0.6 18.4 8.5 18.4Q16.4 18.4 16.4 16V3Z" fill="url(#gdb)" stroke="#b87020" stroke-width="0.8"/><ellipse cx="8.5" cy="3" rx="7.9" ry="2.4" fill="#fde8b0" stroke="#b87020" stroke-width="0.8"/><path d="M0.6 7.5Q8.5 10 16.4 7.5M0.6 12Q8.5 14.5 16.4 12" fill="none" stroke="#b87020" stroke-width="0.7"/></svg>
<div class="t" style="left:274px;top:908px;font-size:14px;color:#333">localhost (utf8)</div>
<svg style="left:404.5px;top:904.5px" width="19" height="19" viewBox="0 0 19 19"><path d="M1 15.8Q1.5 11.8 9.5 11.5Q17.5 11.8 18 15.8Q18 18 9.5 18Q1 18 1 15.8Z" fill="#8cc840" stroke="#4e8a20" stroke-width="0.9"/><path d="M7.5 10V12.8H11.5V10Z" fill="#e8b088"/><ellipse cx="9.5" cy="7" rx="3.9" ry="5" fill="#f6d0a8" stroke="#a86a40" stroke-width="0.6"/><path d="M5.2 8Q4.2 1 9.5 0.9Q14.8 1 13.8 8Q13.5 4.5 11.5 3.8Q9 5 7 3.8Q5.6 5 5.2 8Z" fill="#b06a38"/></svg>
<div class="t" style="left:444px;top:908.5px;font-size:13.1px;color:#333">NIKOLAY (MAIN)</div>
<svg style="left:584px;top:905px" width="18" height="19" viewBox="0 0 18 19"><rect x="0.5" y="0.5" width="17" height="18" fill="#f4f6fc" stroke="#4a6ab0"/><rect x="0.5" y="0.5" width="17" height="4" fill="#e05040"/><text x="9" y="16" font-family="Liberation Sans" font-weight="bold" font-size="10" fill="#2a4a90" text-anchor="middle">31</text></svg>
<div class="t" style="left:624px;top:908px;font-size:14px;color:#333">23.08.2024</div>
<div class="t" style="left:755.5px;top:908px;font-size:13.7px;letter-spacing:0.2px;color:#222">10:27:07:829</div>
<svg style="left:0;top:0" width="1540" height="948"><path d="M1515 910V913M1514 911.5H1517" stroke="#606060" stroke-width="0.9"/><path d="M1511 914V917M1510 915.5H1513" stroke="#606060" stroke-width="0.9"/><path d="M1515 914V917M1514 915.5H1517" stroke="#606060" stroke-width="0.9"/><path d="M1507 918V921M1506 919.5H1509" stroke="#606060" stroke-width="0.9"/><path d="M1511 918V921M1510 919.5H1513" stroke="#606060" stroke-width="0.9"/><path d="M1515 918V921M1514 919.5H1517" stroke="#606060" stroke-width="0.9"/><path d="M1503 922V925M1502 923.5H1505" stroke="#606060" stroke-width="0.9"/><path d="M1507 922V925M1506 923.5H1509" stroke="#606060" stroke-width="0.9"/><path d="M1511 922V925M1510 923.5H1513" stroke="#606060" stroke-width="0.9"/><path d="M1515 922V925M1514 923.5H1517" stroke="#606060" stroke-width="0.9"/></svg>
</body></html>
